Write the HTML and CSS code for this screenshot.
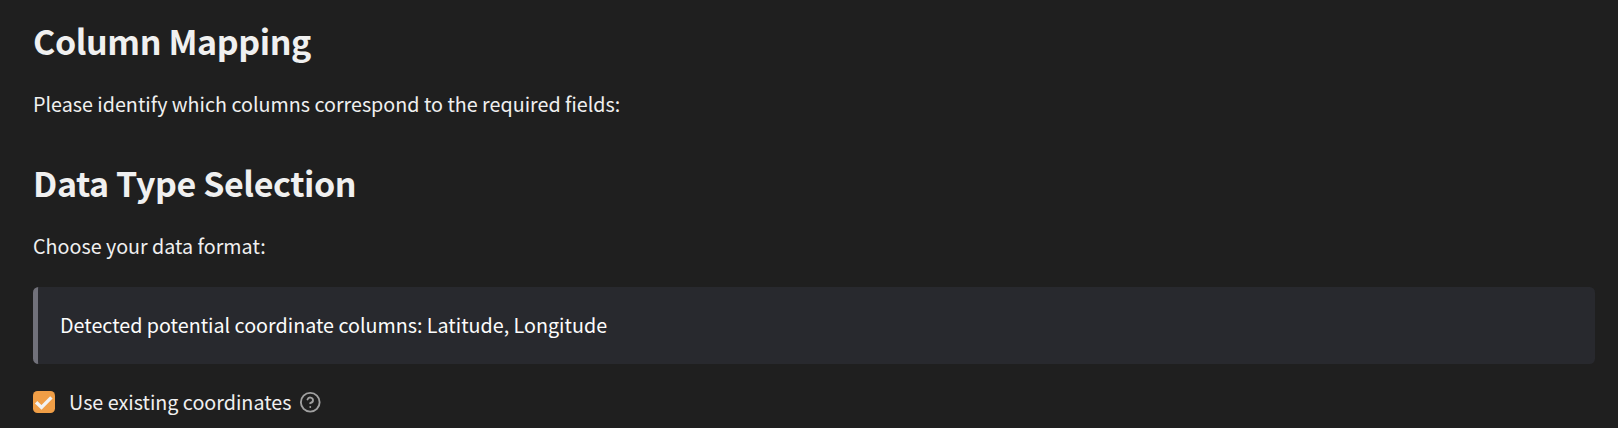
FILE: index.html
```html
<!DOCTYPE html>
<html lang="en">
<head>
<meta charset="utf-8">
<title>Column Mapping</title>
<link rel="stylesheet" href="styles.css">
</head>
<body>
<main class="page">
  <section class="section">
    <h2 class="heading">Column Mapping</h2>
    <p class="text">Please identify which columns correspond to the required fields:</p>
  </section>
  <section class="section">
    <h2 class="heading">Data Type Selection</h2>
    <p class="text">Choose your data format:</p>
  </section>
  <div class="notice"><span class="notice-text">Detected potential coordinate columns: Latitude, Longitude</span></div>
  <label class="option">
    <svg class="check" viewBox="0 0 22 22" aria-hidden="true"><rect width="22" height="22" rx="4.5" fill="#f09e46"/><path d="M3.1 11.2 L8.5 16.4 L18.4 6.4" fill="none" stroke="#f2f2f2" stroke-width="3.4"/></svg>
    <span class="option-text">Use existing coordinates</span>
    <svg class="help" viewBox="0 0 24 24" aria-hidden="true"><g fill="none" stroke="#a0a0a0" stroke-width="2" stroke-linecap="round" stroke-linejoin="round"><circle cx="12" cy="12" r="10"/><path d="M9.09 9a3 3 0 0 1 5.83 1c0 2-3 3-3 3M12 17h.01"/></g></svg>
  </label>
</main>
</body>
</html>
```
FILE: styles.css
```css
* { box-sizing: border-box; }
body {
  margin: 0;
  background: #1f1f1f;
  color: #f0f0f0;
  font-family: "Noto Sans CJK SC", "Noto Sans CJK JP", "Noto Sans", sans-serif;
}
.page {
  height: 428px;
  padding: 21px 23px 0 33px;
  overflow: hidden;
}
.section { height: 142px; }
.section + .section { height: 124px; }
.heading {
  margin: 0;
  font-size: 34px;
  font-weight: 600;
  letter-spacing: -0.4px;
  line-height: 40px;
  white-space: nowrap;
}
.text {
  margin: 27px 0 0;
  font-size: 19.72px;
  line-height: 32px;
  white-space: nowrap;
}
.notice {
  display: flex;
  align-items: center;
  height: 77px;
  padding: 0 0 2px 22px;
  border-left: 5px solid #71717a;
  border-radius: 5.5px;
  background: #28292e;
  color: #fcfcfc;
}
.notice-text, .option-text {
  font-size: 19.72px;
  line-height: 32px;
  white-space: nowrap;
}
.option {
  display: flex;
  align-items: center;
  height: 32px;
  margin-top: 22px;
}
.check { width: 22px; height: 22px; margin-right: 14px; }
.help { width: 22.5px; height: 22.5px; margin-left: 8px; }
```
